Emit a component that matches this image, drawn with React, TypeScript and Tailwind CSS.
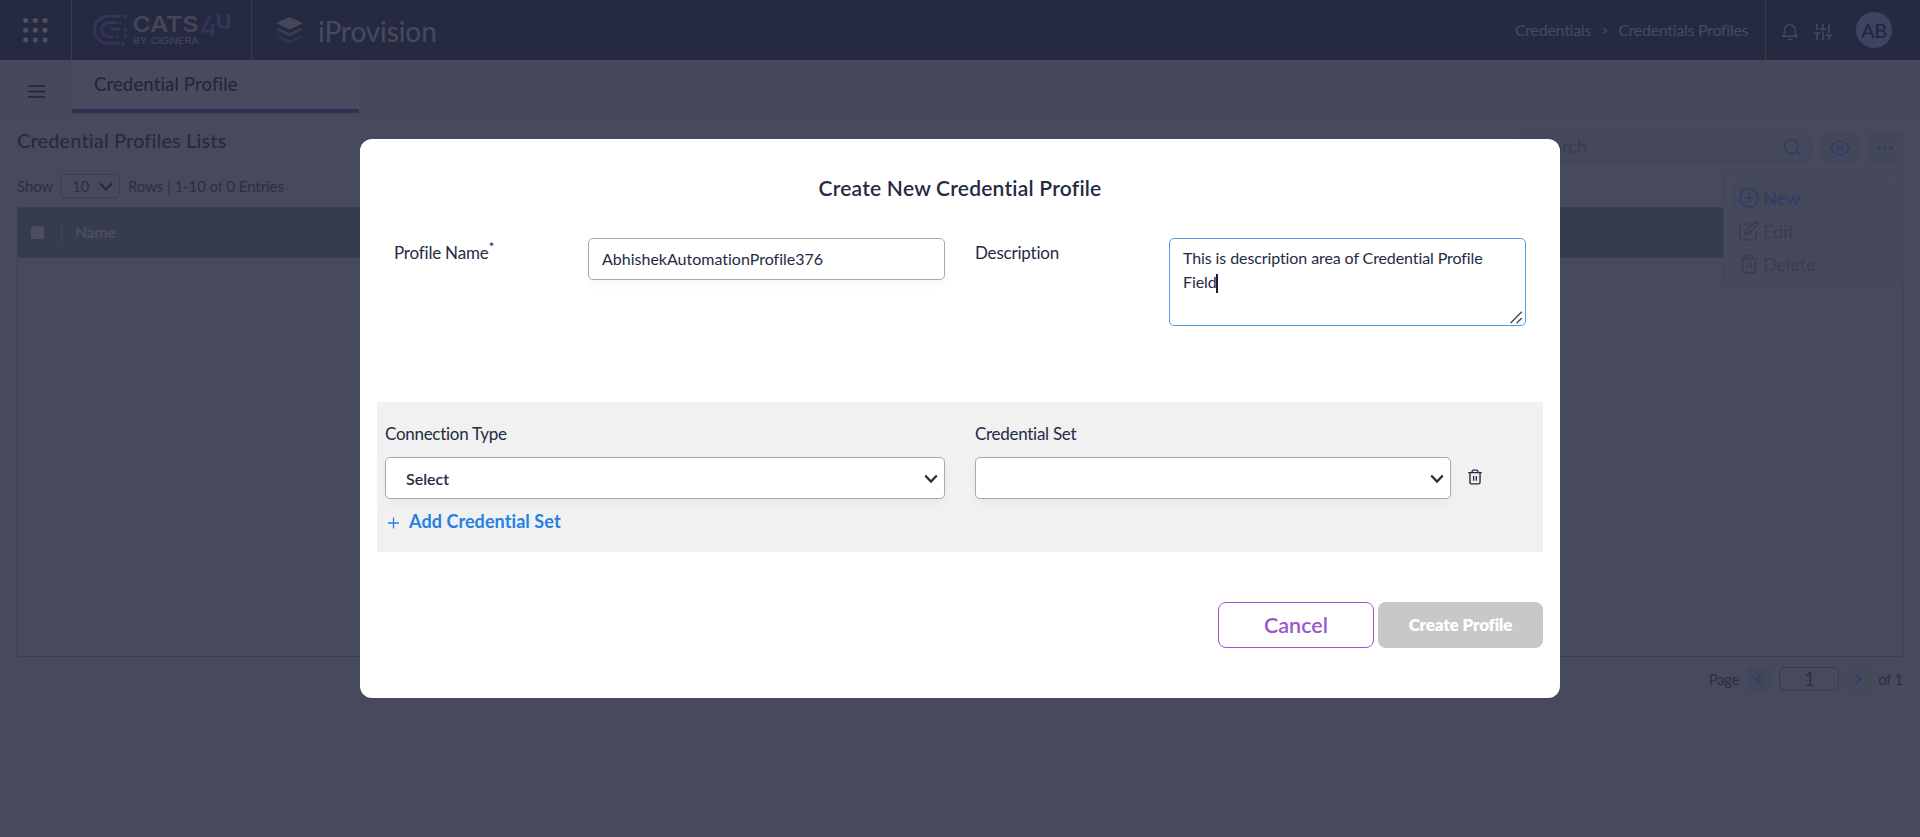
import React from "react";

function Logo() {
  return (
    <svg width="138" height="32" viewBox="0 0 138 32" fill="none" className="overflow-visible">
      <defs>
        <linearGradient id="mark" x1="0" y1="0" x2="0" y2="32" gradientUnits="userSpaceOnUse">
          <stop offset="0" stopColor="#2b3e5c" />
          <stop offset="1" stopColor="#363156" />
        </linearGradient>
        <linearGradient id="four" x1="107" y1="0" x2="137" y2="0" gradientUnits="userSpaceOnUse">
          <stop offset="0" stopColor="#353156" />
          <stop offset="0.5" stopColor="#323658" />
          <stop offset="1" stopColor="#2b3b5b" />
        </linearGradient>
      </defs>
      <g stroke="url(#mark)" strokeWidth="2.6">
        <path d="M28 2.3H15A13.6 13.6 0 0 0 15 29.5H26" />
        <path d="M24 8.8H15.5A7 7 0 0 0 15.5 22.8H20" />
        <path d="M27 15.2H18.5" />
      </g>
      <g fill="#2f3758">
        <path d="M31 1h3v3h-3zM26 7.4h2.6v2.6H26zM31 14h3v3h-3zM31 20.4h3v3h-3zM22.6 21.4h2.8v2.8h-2.8zM28.4 28.2h3v3h-3z" />
      </g>
      <text x="39.5" y="17.6" textLength="66" lengthAdjust="spacingAndGlyphs" fontFamily="Inter, sans-serif" fontWeight="600" fontSize="22" fill="#434759">
        CATS
      </text>
      <text x="39.8" y="30" textLength="66" lengthAdjust="spacingAndGlyphs" fontFamily="Inter, sans-serif" fontWeight="400" fontSize="9.6" fill="#45495b">
        BY CIGNERA
      </text>
      <path d="M117 1.6L109.2 17H121.8M119.3 10V22" stroke="url(#four)" strokeWidth="2.8" />
      <path d="M125.6 0V8.6a4.6 4.6 0 0 0 4.6 4.6h5.2V0" stroke="url(#four)" strokeWidth="3.2" />
    </svg>
  );
}

function Trash({ size, className }: { size: number; className: string }) {
  return (
    <svg width={size} height={size} viewBox="0 0 20 20" fill="none" stroke="currentColor" strokeWidth="1.7" className={className}>
      <path d="M1.5 4.6H18.5M6.3 4.4V3.2A1.9 1.9 0 0 1 8.2 1.4H11.8A1.9 1.9 0 0 1 13.7 3.2V4.4M3.7 4.8V16.6A2 2 0 0 0 5.7 18.6H14.3A2 2 0 0 0 16.3 16.6V4.8M8.3 8.6V14.6M11.7 8.6V14.6" />
    </svg>
  );
}

function Chevron() {
  return (
    <svg width="14" height="10" viewBox="0 0 14 10" fill="none" stroke="currentColor" strokeWidth="2.2">
      <path d="M1.2 1.4L7 7.6L12.8 1.4" />
    </svg>
  );
}

function Header() {
  return (
    <header className="flex h-[60px] bg-[#262a40] text-[#464a5c]">
      <div className="flex w-[72px] items-center border-r border-[#3a3d50] pl-[23px]">
        <svg width="25" height="25" viewBox="0 0 25 25" fill="#4e5162">
          {[2.6, 12.3, 22].map((y) => [2.6, 12.3, 22].map((x) => <circle key={`${x}-${y}`} cx={x} cy={y} r="2.5" />))}
        </svg>
      </div>
      <div className="flex w-[180px] border-r border-[#3a3d50] pt-3.5 pl-[21px]">
        <Logo />
      </div>
      <div className="flex flex-1 items-start pl-6">
        <svg width="27" height="27" viewBox="0 0 27 27" className="mt-[17px]">
          <path d="M13.5 0L27 6.2L13.5 12.6L0 6.2Z" fill="#44485a" />
          <path d="M0 12.8L3.2 11.3L13.5 16.2L23.8 11.3L27 12.8L13.5 19.2Z" fill="#3a3e51" />
          <path d="M0 20L3.2 18.5L13.5 23.4L23.8 18.5L27 20L13.5 26.6Z" fill="#303449" />
        </svg>
        <span className="mt-[11px] ml-[15px] text-[28px] leading-10 tracking-[-0.1px]">iProvision</span>
      </div>
      <nav className="flex w-[250px] items-start pt-[18px] text-base leading-6 tracking-[-0.28px]">
        <span>Credentials</span>
        <span className="mx-[10px] text-[13px]">&gt;</span>
        <span>Credentials Profiles</span>
      </nav>
      <div className="flex w-[155px] border-l border-[#3a3d50] pl-[15px]">
        <svg width="18" height="18" viewBox="0 0 18 18" fill="none" stroke="#464a5c" strokeWidth="1.4" className="mt-[23px]">
          <path d="M2 13.2C3.4 11.8 3.6 10.4 3.6 7.2A5 5.4 0 0 1 14 7.2C14 10.4 14.4 11.8 15.8 13.2ZM7.2 15.4A1.9 1.6 0 0 0 10.8 15.4" />
        </svg>
        <svg width="18" height="17" viewBox="0 0 18 17" fill="none" stroke="#464a5c" strokeWidth="1.5" className="mt-6 ml-[15px]">
          <path d="M3 0V6.4M3 9.6V16M9 0V5M9 7.4V16M15 0V9M15 11.6V16M0 9.2H6M6 5.2H12M12 11.2H18" />
        </svg>
        <div className="mt-3 ml-6 flex h-9 w-9 items-center justify-center rounded-full bg-[#3f4262] text-[20px] font-medium tracking-[-0.3px] text-[#23273a]">AB</div>
      </div>
    </header>
  );
}

function MenuItem({ icon, label, active }: { icon: React.ReactNode; label: string; active?: boolean }) {
  return (
    <div className={`flex h-8 items-center gap-1 rounded-lg pl-[7px] text-[18px] ${active ? "bg-[#44485a] text-[#2a3e68]" : "bg-[#454959] text-[#393d51]"}`}>
      {icon}
      <span className="leading-6">{label}</span>
    </div>
  );
}

function Page() {
  return (
    <div className="flex h-full flex-col">
      <Header />
      <div className="flex h-[54px] border-b border-[#414557] bg-[#454959] shadow-[0_2px_3px_#43475a]">
        <div className="w-[72px] pt-[25px] pl-7">
          <svg width="17" height="13" viewBox="0 0 17 13" stroke="#202438" strokeWidth="1.5">
            <path d="M0 1H17M0 6.5H17M0 12H17" />
          </svg>
        </div>
        <div className="h-[53px] w-[287px] border-b-4 border-[#322f53] bg-[#474b5d] pt-3 pl-[22px] text-[18.5px] leading-6 font-medium tracking-[0.12px] text-[#23273a]">Credential Profile</div>
      </div>

      <div className="flex h-[93px] items-start justify-between pr-[17px] pl-[17px] text-[#2b2f44]">
        <div>
          <h1 className="mt-[14px] text-[20px] leading-6 font-medium tracking-[0.12px] text-[#262a40]">Credential Profiles Lists</h1>
          <div className="mt-[22px] flex h-6 items-center text-[15px] leading-6 tracking-[-0.08px]">
            <span className="w-9">Show</span>
            <div className="mr-2 ml-[7px] flex h-6 w-[60px] items-center justify-between rounded-[5px] border border-[#3a3e50] pr-[6px] pl-[11px]">
              <span>10</span>
              <span className="mt-0.5 text-[#262a3c]"><Chevron /></span>
            </div>
            <span>Rows | 1-10 of 0 Entries</span>
          </div>
        </div>
        <div className="flex gap-2 pt-[15px]">
          <div className="flex h-[35px] w-[298px] items-center justify-between rounded-full border border-[#414558] bg-[#44485a] pr-[11px] pl-[18px]">
            <span className="text-[18px] text-[#383c50]">Search</span>
            <svg width="17" height="17" viewBox="0 0 17 17" fill="none" stroke="#2a3e68" strokeWidth="1.5" className="mt-0.5">
              <circle cx="7.5" cy="7.5" r="6.7" />
              <path d="M12.3 12.3L16.4 16.4" />
            </svg>
          </div>
          <div className="mt-px flex h-[35px] w-[37px] items-center justify-center rounded-[10px] bg-[#434759]">
            <svg width="20" height="16" viewBox="0 0 20 16" fill="none" stroke="#2a3e68" strokeWidth="1.5">
              <path d="M1 8C3.2 4 6 1.3 10 1.3S16.8 4 19 8C16.8 12 14 14.7 10 14.7S3.2 12 1 8Z" />
              <circle cx="10" cy="8" r="2.6" />
            </svg>
          </div>
          <div className="mt-px flex h-[35px] w-[37px] items-center justify-center rounded-[10px] bg-[#434759]">
            <svg width="16" height="4" viewBox="0 0 16 4" fill="#2a3e68">
              <circle cx="2" cy="2" r="1.8" />
              <circle cx="8" cy="2" r="1.8" />
              <circle cx="14" cy="2" r="1.8" />
            </svg>
          </div>
        </div>
      </div>

      <div className="mx-[17px] h-[450px] border border-[#3b3f52]">
        <div className="flex h-[50px] items-center border-b border-[#3b3f52] bg-[#373b4e] pl-[13px]">
          <span className="h-[13px] w-[13px] rounded-[2px] bg-[#4a4e60]" />
          <span className="ml-[17px] h-6 w-px bg-[#404457]" />
          <span className="ml-[13px] -mt-px text-base font-bold tracking-[-0.5px] text-[#4a4e60]">Name</span>
        </div>
      </div>

      <div className="mr-[17px] mt-[10px] flex h-6 items-center justify-end text-[15px] leading-6 tracking-[-0.3px] text-[#2b2f44]">
        <span>Page</span>
        <span className="ml-2 flex h-6 w-6 items-center justify-center rounded-md bg-[#42465a]">
          <svg width="8" height="12" viewBox="0 0 8 12" fill="none" stroke="#2a3e68" strokeWidth="1.6">
            <path d="M6.8 0.8L1.4 6L6.8 11.2" />
          </svg>
        </span>
        <span className="ml-2 flex h-6 w-[60px] items-center justify-center rounded-md border border-[#383c50] text-[19px]">1</span>
        <span className="ml-[7px] flex h-6 w-6 items-center justify-center rounded-md border border-[#424659]">
          <svg width="8" height="12" viewBox="0 0 8 12" fill="none" stroke="#2a3e68" strokeWidth="1.6">
            <path d="M1.2 0.8L6.6 6L1.2 11.2" />
          </svg>
        </span>
        <span className="ml-2">of 1</span>
      </div>

      <div className="absolute top-[170px] left-[1723px] flex h-[116px] w-[180px] flex-col gap-px rounded-md border border-[#414558] bg-[#464a5c] px-2 pt-[11px]">
        <MenuItem
          active
          label="New"
          icon={
            <svg width="20" height="20" viewBox="0 0 20 20" fill="none" stroke="currentColor" strokeWidth="1.5">
              <circle cx="10" cy="10" r="9" />
              <path d="M10 5.6V14.4M5.6 10H14.4" />
            </svg>
          }
        />
        <MenuItem
          label="Edit"
          icon={
            <svg width="20" height="20" viewBox="0 0 20 20" fill="none" stroke="currentColor" strokeWidth="1.6">
              <path d="M10 3H2.6A1.6 1.6 0 0 0 1 4.6V17.2A1.6 1.6 0 0 0 2.6 18.8H15.4A1.6 1.6 0 0 0 17 17.2V10.6M6.2 13.4L7 9.8L15.4 1.6A1.9 1.9 0 0 1 18.2 4.4L9.8 12.6Z" />
            </svg>
          }
        />
        <MenuItem label="Delete" icon={<Trash size={20} className="" />} />
      </div>
    </div>
  );
}

const fieldBox = "rounded-[5px] border border-[#a9a9a9] bg-white shadow-[0_5px_10px_rgba(0,0,0,0.03)]";

function Modal() {
  return (
    <section role="dialog" className="absolute top-[139px] left-[360px] flex h-[559px] w-[1200px] flex-col rounded-xl bg-white px-[17px] text-[#262a43]">
      <h2 className="pt-[37px] text-center text-[21px] leading-6 font-semibold tracking-[0.22px]">Create New Credential Profile</h2>

      <div className="mt-[38px] flex h-[164px] pl-[17px] text-[17px] leading-6">
        <label className="w-[194px] pt-[3px] tracking-[-0.2px]">
          Profile Name<sup className="text-[14px] leading-none">*</sup>
        </label>
        <div className={`flex h-[42px] w-[357px] pt-2 pl-[13px] text-base ${fieldBox}`}>AbhishekAutomationProfile376</div>
        <label className="ml-[30px] w-[194px] pt-[3px] tracking-[-0.2px]">Description</label>
        <div className="relative h-[88px] w-[357px] rounded-[5px] border border-[#549be8] pt-[7px] pr-6 pl-[13px] text-base tracking-[-0.1px]">
          This is description area of Credential Profile Field
          <span className="-mb-[5px] -ml-px inline-block h-[19px] w-[2px] bg-[#1c2036]" />
          <svg width="13" height="13" viewBox="0 0 13 13" stroke="#444" strokeWidth="1.3" className="absolute right-[2px] bottom-[1px]">
            <path d="M0.6 12L11.8 0.8M6.6 12.2L11.8 7" />
          </svg>
        </div>
      </div>

      <div className="h-[150px] bg-[#f1f1f1] pl-2">
        <div className="flex pt-5 text-[17px] leading-6 tracking-[-0.28px]">
          <span className="w-[590px]">Connection Type</span>
          <span>Credential Set</span>
        </div>
        <div className="mt-[11px] flex items-start">
          <div className={`flex h-[42px] w-[560px] justify-between pt-[9px] pr-[6px] pl-5 text-base leading-6 font-semibold ${fieldBox}`}>
            <span>Select</span>
            <span className="mt-[7px]"><Chevron /></span>
          </div>
          <div className={`ml-[30px] flex h-[42px] w-[476px] justify-end pt-4 pr-[6px] ${fieldBox}`}>
            <Chevron />
          </div>
          <Trash size={16} className="mt-3 ml-4" />
        </div>
        <button className="mt-[10px] flex items-start text-[18px] leading-6 font-bold tracking-[0.08px] text-[#2580e8]">
          <svg width="11" height="12" viewBox="0 0 11 12" stroke="currentColor" strokeWidth="1.3" className="mt-2 ml-[3px]">
            <path d="M5.5 0.5V11.5M0 6H11" />
          </svg>
          <span className="ml-[10px]">Add Credential Set</span>
        </button>
      </div>

      <div className="mt-[50px] flex justify-end gap-1">
        <button className="h-[46px] w-[156px] rounded-lg border border-[#9a57cd] text-[21.5px] font-semibold text-[#9a57cd]">Cancel</button>
        <button className="h-[46px] w-[165px] rounded-lg bg-[#c8c8c8] text-[17px] font-extrabold tracking-[-0.15px] text-white">Create Profile</button>
      </div>
    </section>
  );
}

export default function App() {
  return (
    <main className="relative h-[837px] w-[1920px] overflow-hidden bg-[#464a5c] font-['Lato',sans-serif] [font-variant-ligatures:none]">
      <Page />
      <Modal />
    </main>
  );
}
